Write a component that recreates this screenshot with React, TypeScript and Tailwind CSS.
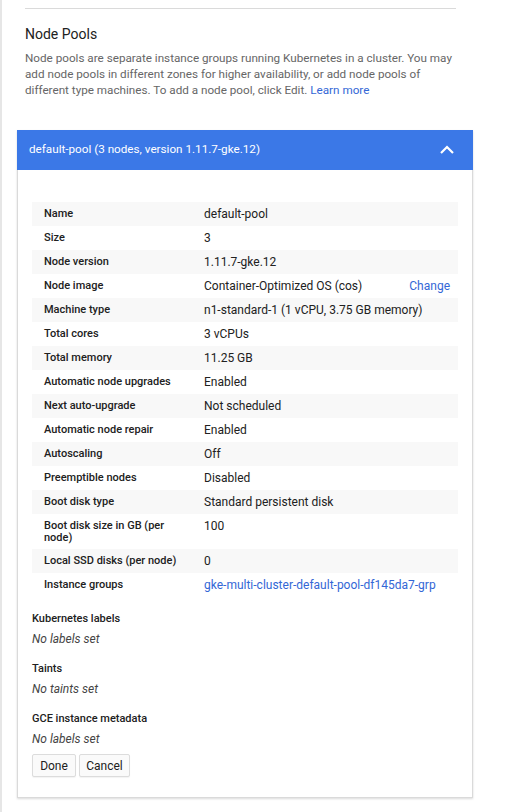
import React from 'react';

type Row = {
    label: string;
    value: string;
    link?: boolean;
    action?: string;
};

const rows: Row[] = [
    { label: 'Name', value: 'default-pool' },
    { label: 'Size', value: '3' },
    { label: 'Node version', value: '1.11.7-gke.12' },
    { label: 'Node image', value: 'Container-Optimized OS (cos)', action: 'Change' },
    { label: 'Machine type', value: 'n1-standard-1 (1 vCPU, 3.75 GB memory)' },
    { label: 'Total cores', value: '3 vCPUs' },
    { label: 'Total memory', value: '11.25 GB' },
    { label: 'Automatic node upgrades', value: 'Enabled' },
    { label: 'Next auto-upgrade', value: 'Not scheduled' },
    { label: 'Automatic node repair', value: 'Enabled' },
    { label: 'Autoscaling', value: 'Off' },
    { label: 'Preemptible nodes', value: 'Disabled' },
    { label: 'Boot disk type', value: 'Standard persistent disk' },
    { label: 'Boot disk size in GB (per node)', value: '100' },
    { label: 'Local SSD disks (per node)', value: '0' },
    { label: 'Instance groups', value: 'gke-multi-cluster-default-pool-df145da7-grp', link: true },
];

const extras = [
    { title: 'Kubernetes labels', empty: 'No labels set' },
    { title: 'Taints', empty: 'No taints set' },
    { title: 'GCE instance metadata', empty: 'No labels set' },
];

const DetailRow: React.FC<{ row: Row; striped: boolean }> = ({ row, striped }) => (
    <div className={`flex min-h-[24px] ${striped ? 'bg-[#f8f8f8]' : 'bg-white'}`}>
        <div className="w-[160px] shrink-0 pl-[12px] pr-[12px] pt-[6px] pb-[5px] text-[11px] leading-[12px] font-medium text-[#212121]">
            {row.label}
        </div>
        <div className="flex flex-1 items-start justify-between pl-[12px] pr-[8px] pt-[5px] text-[12px] leading-[14px]">
            <span className={row.link ? 'text-[#3367d6]' : 'text-[#212121]'}>{row.value}</span>
            {row.action && <span className="text-[#3367d6]">{row.action}</span>}
        </div>
    </div>
);

const App: React.FC = () => {
    return (
        <div className="w-[532px] h-[812px] bg-white border-l-2 border-[#e6e6e6] font-['Roboto',sans-serif] overflow-hidden">
            <div className="pl-[23px] pt-[8px]">
                <div className="w-[431px] h-px bg-[#dadada]" />
                <h2 className="mt-[15px] text-[14px] leading-[20px] font-normal text-[#212121]">Node Pools</h2>
                <p className="mt-[6px] whitespace-nowrap text-[11.7px] leading-[16px] text-[#666666]">
                    Node pools are separate instance groups running Kubernetes in a cluster. You may
                    <br />
                    add node pools in different zones for higher availability, or add node pools of
                    <br />
                    different type machines. To add a node pool, click Edit. <span className="text-[#3367d6]">Learn more</span>
                </p>
            </div>

            {/* node pool card */}
            <div className="ml-[15px] mt-[32px] w-[456px] bg-white border border-[#dadada] shadow-[0_1px_2px_rgba(0,0,0,0.15)]">
                <div className="-mx-px -mt-px h-[40px] bg-[#3b78e7] flex items-center justify-between pl-[12px] pr-[18px]">
                    <span className="text-[11.7px] text-white">default-pool (3 nodes, version 1.11.7-gke.12)</span>
                    <svg width="16" height="10" viewBox="0 0 16 10" fill="none">
                        <path d="M2 8 L8 2 L14 8" stroke="white" strokeWidth="2.2" />
                    </svg>
                </div>

                <div className="px-[14px] pt-[32px] pb-[20px]">
                    <div className="flex flex-col">
                        {rows.map((row, i) => (
                            <DetailRow key={row.label} row={row} striped={i % 2 === 0} />
                        ))}
                    </div>

                    {extras.map((item) => (
                        <div key={item.title} className="mt-[15px]">
                            <div className="text-[11px] leading-[14px] font-medium text-[#212121]">{item.title}</div>
                            <div className="mt-[5px] text-[12px] leading-[16px] italic text-[#444444]">{item.empty}</div>
                        </div>
                    ))}

                    <div className="mt-[7px] flex gap-[3px]">
                        <button className="h-[23px] w-[44px] rounded-[2px] border border-[#dcdcdc] bg-[#fafafa] text-[12px] text-[#212121] shadow-[0_1px_1px_rgba(0,0,0,0.05)]">
                            Done
                        </button>
                        <button className="h-[23px] w-[51px] rounded-[2px] border border-[#dcdcdc] bg-[#fafafa] text-[12px] text-[#212121] shadow-[0_1px_1px_rgba(0,0,0,0.05)]">
                            Cancel
                        </button>
                    </div>
                </div>
            </div>
        </div>
    );
};

export default App;
